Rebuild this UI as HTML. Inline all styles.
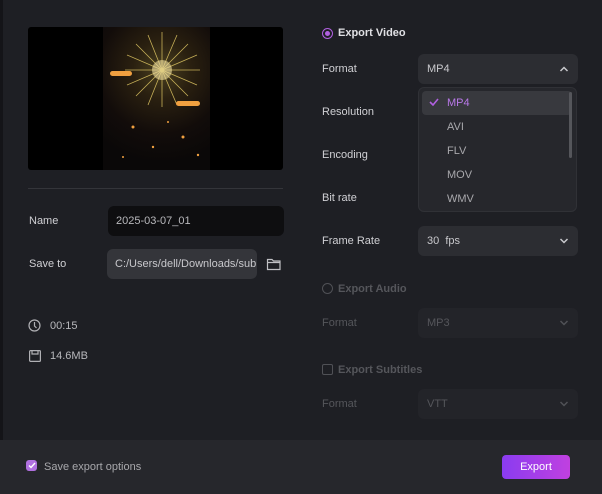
<!DOCTYPE html>
<html><head><style>
body{margin:0;width:602px;height:494px;background:#1e1f24;font-family:"Liberation Sans",sans-serif;font-size:11px;color:#d8d8dc;position:relative;overflow:hidden}
.a{position:absolute}
.box{position:absolute;border-radius:6px;background:#2c2d32}
.lab{position:absolute;color:#d0d0d4}
.dim{color:#55565b}
.chev{position:absolute;right:9px;top:11px}
</style></head><body>
<div class="a" style="left:0;top:0;width:3px;height:494px;background:#141418"></div>
<div class="a" style="left:28px;top:27px;width:255px;height:143px;background:#000;border-radius:3px"></div>
<div class="a" style="left:103px;top:27px;width:107px;height:143px;background:radial-gradient(circle at 55% 30%,#4a4020 0,#2a2010 25%,#120c0a 55%,#0a0808 80%)"></div>
<svg class="a" style="left:103px;top:27px" width="107" height="143">
<g stroke="#d8c060" stroke-width="0.8" opacity="0.9">
<path d="M59 43L59 5M59 43L59 80M59 43L22 43M59 43L97 43M59 43L33 17M59 43L85 17M59 43L33 69M59 43L85 69M59 43L45 8M59 43L74 8M59 43L45 78M59 43L74 78M59 43L24 28M59 43L94 28M59 43L24 58M59 43L94 58"/>
</g>
<circle cx="59" cy="43" r="10" fill="#f0e0a0" opacity="0.6"/>
<g fill="#f0a040"><circle cx="30" cy="100" r="1.5"/><circle cx="50" cy="120" r="1.2"/><circle cx="80" cy="110" r="1.5"/><circle cx="20" cy="130" r="1"/><circle cx="95" cy="128" r="1.2"/><circle cx="65" cy="95" r="1"/></g>
</svg>
<div class="a" style="left:110px;top:71px;width:22px;height:5px;background:#f0a040;border-radius:3px"></div>
<div class="a" style="left:176px;top:101px;width:24px;height:5px;background:#f0a040;border-radius:3px"></div>
<div class="a" style="left:28px;top:188px;width:255px;height:1px;background:#34353a"></div>
<div class="lab" style="left:29px;top:215px">Name</div>
<div class="box" style="left:108px;top:206px;width:176px;height:30px;background:#0e0e10"><span class="a" style="left:8px;top:9px;color:#b8b8bc">2025-03-07_01</span></div>
<div class="lab" style="left:29px;top:258px">Save to</div>
<div class="box" style="left:107px;top:249px;width:150px;height:30px;background:#34353a"><span class="a" style="left:8px;top:9px;color:#c8c8cc">C:/Users/dell/Downloads/sub</span></div>
<svg class="a" style="left:266px;top:257px" width="16" height="14" viewBox="0 0 16 14"><path d="M1.5 2.5h4.5l1.5 1.5h6.5v8.5h-12.5z M1.5 5.5h12.5" fill="none" stroke="#c0c0c4" stroke-width="1.2"/></svg>
<svg class="a" style="left:28px;top:319px" width="13" height="13"><circle cx="6.5" cy="6.5" r="5.5" fill="none" stroke="#b0b0b4" stroke-width="1.2"/><path d="M6.5 3v4l2 2" fill="none" stroke="#b0b0b4" stroke-width="1.2"/></svg>
<div class="lab" style="left:50px;top:320px;color:#b8b8bc">00:15</div>
<svg class="a" style="left:29px;top:350px" width="12" height="12"><rect x="0.6" y="0.6" width="10.8" height="10.8" rx="1" fill="none" stroke="#b0b0b4" stroke-width="1.2"/><path d="M3 1v3h6V1" fill="none" stroke="#b0b0b4" stroke-width="1.2"/></svg>
<div class="lab" style="left:50px;top:350px;color:#b8b8bc">14.6MB</div>

<div class="a" style="left:322px;top:28px;width:9px;height:9px;border:1.5px solid #b060e0;border-radius:50%"><div class="a" style="left:2px;top:2px;width:5px;height:5px;border-radius:50%;background:#b060e0"></div></div>
<div class="lab" style="left:338px;top:27px;font-weight:bold;color:#e0e0e4">Export Video</div>
<div class="lab" style="left:322px;top:63px">Format</div>
<div class="box" style="left:418px;top:54px;width:160px;height:30px"><span class="a" style="left:9px;top:9px;color:#c8c8cc">MP4</span><svg class="chev" width="10" height="8"><path d="M1.5 6L5 2.5L8.5 6" fill="none" stroke="#c8c8cc" stroke-width="1.5"/></svg></div>
<div class="lab" style="left:322px;top:106px">Resolution</div>
<div class="lab" style="left:322px;top:149px">Encoding</div>
<div class="lab" style="left:322px;top:192px">Bit rate</div>
<div class="box" style="left:418px;top:87px;width:159px;height:125px;background:#26272c;border:1px solid #303136;box-sizing:border-box">
<div class="a" style="left:3px;top:3px;width:150px;height:24px;background:#38393e;border-radius:4px"></div>
<svg class="a" style="left:10px;top:10px" width="10" height="8"><path d="M1 4L4 7L9 1" fill="none" stroke="#b060e0" stroke-width="1.6"/></svg>
<span class="a" style="left:28px;top:9px;color:#b878e8">MP4</span>
<span class="a" style="left:28px;top:33px;color:#a8a8ac">AVI</span>
<span class="a" style="left:28px;top:57px;color:#a8a8ac">FLV</span>
<span class="a" style="left:28px;top:81px;color:#a8a8ac">MOV</span>
<span class="a" style="left:28px;top:105px;color:#a8a8ac">WMV</span>
<div class="a" style="left:150px;top:4px;width:3px;height:66px;background:#55565b;border-radius:2px"></div>
</div>
<div class="lab" style="left:322px;top:235px">Frame Rate</div>
<div class="box" style="left:418px;top:226px;width:160px;height:30px"><span class="a" style="left:9px;top:9px;color:#c8c8cc">30&nbsp; fps</span><svg class="chev" width="10" height="8"><path d="M1.5 2L5 5.5L8.5 2" fill="none" stroke="#c8c8cc" stroke-width="1.5"/></svg></div>

<div class="a" style="left:322px;top:283px;width:9px;height:9px;border:1.2px solid #505156;border-radius:50%"></div>
<div class="lab dim" style="left:338px;top:283px;font-weight:bold">Export Audio</div>
<div class="lab dim" style="left:322px;top:317px">Format</div>
<div class="box" style="left:418px;top:308px;width:160px;height:30px;background:#232429"><span class="a dim" style="left:9px;top:9px">MP3</span><svg class="chev" width="10" height="8"><path d="M1.5 2L5 5.5L8.5 2" fill="none" stroke="#505156" stroke-width="1.5"/></svg></div>
<div class="a" style="left:322px;top:364px;width:9px;height:9px;border:1.2px solid #505156;border-radius:2px"></div>
<div class="lab dim" style="left:338px;top:364px;font-weight:bold">Export Subtitles</div>
<div class="lab dim" style="left:322px;top:398px">Format</div>
<div class="box" style="left:418px;top:389px;width:160px;height:30px;background:#232429"><span class="a dim" style="left:9px;top:9px">VTT</span><svg class="chev" width="10" height="8"><path d="M1.5 2L5 5.5L8.5 2" fill="none" stroke="#505156" stroke-width="1.5"/></svg></div>

<div class="a" style="left:0;top:440px;width:602px;height:54px;background:#26272c"></div>
<div class="a" style="left:26px;top:460px;width:11px;height:11px;border-radius:3px;background:#b070e0"><svg class="a" style="left:2px;top:2px" width="8" height="7"><path d="M1 3.5L3 5.5L7 1" fill="none" stroke="#fff" stroke-width="1.4"/></svg></div>
<div class="lab" style="left:44px;top:461px;color:#a8a8ac">Save export options</div>
<div class="a" style="left:502px;top:455px;width:68px;height:24px;border-radius:4px;background:linear-gradient(90deg,#8a3cf0,#c040e0);color:#fff;text-align:center;line-height:24px">Export</div>
</body></html>
